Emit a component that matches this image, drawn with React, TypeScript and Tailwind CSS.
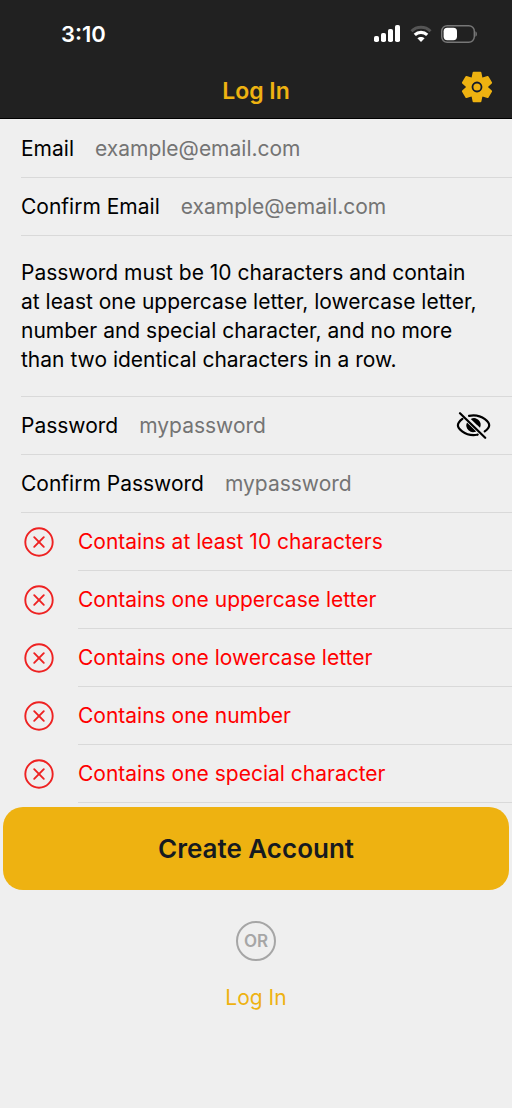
import type { ReactNode } from "react";

function SignalIcon() {
  return (
    <svg className="h-[18px] w-7" viewBox="0 0 28 18" fill="white" aria-hidden="true">
      <rect x="1" y="11" width="5" height="6" rx="1.8" />
      <rect x="8" y="8" width="5" height="9" rx="1.8" />
      <rect x="15" y="4" width="5" height="13" rx="1.8" />
      <rect x="22" y="0" width="5" height="17" rx="1.8" />
    </svg>
  );
}

function WifiIcon() {
  return (
    <svg className="h-[18px] w-[22px]" viewBox="0 0 22 18" fill="none" aria-hidden="true">
      <path d="M1.5 6.2C6.8 1 15.2 1 20.5 6.2" stroke="#555" strokeWidth="3" />
      <path d="M4.8 9.9c3.5-3.3 8.9-3.3 12.4 0" stroke="white" strokeWidth="3.2" />
      <path d="M11 17l-3.6-3.7c2-1.9 5.2-1.9 7.2 0z" fill="white" />
    </svg>
  );
}

function BatteryIcon() {
  return (
    <svg className="h-[18px] w-9" viewBox="0 0 36 18" fill="none" aria-hidden="true">
      <rect x="0.7" y="0.7" width="32.6" height="16.6" rx="5.5" stroke="#777" strokeWidth="1.4" />
      <rect x="2.6" y="2.8" width="13.4" height="12.4" rx="3.6" fill="white" />
      <path d="M34.4 6.2c2 .8 2 4.8 0 5.6z" fill="#777" />
    </svg>
  );
}

const toothAngles = [0, 60, 120, 180, 240, 300];

function GearIcon() {
  return (
    <svg className="size-8" viewBox="-16 -16 32 32" aria-hidden="true">
      <g fill="#eeb211" stroke="#eeb211" strokeWidth="2" strokeLinejoin="round">
        <circle r="9.8" />
        {toothAngles.map((angle) => (
          <path key={angle} d="M-3.4-14.3H3.4L4.4-9.3H-4.4z" transform={`rotate(${angle})`} />
        ))}
      </g>
      <circle r="4.5" fill="none" stroke="#111a2c" strokeWidth="1.8" />
    </svg>
  );
}

function EyeSlashIcon() {
  return (
    <svg
      className="h-7 w-9"
      viewBox="0 0 36 28"
      fill="none"
      stroke="black"
      strokeWidth="2.2"
      strokeLinecap="round"
      aria-hidden="true"
    >
      <path d="M6.4 6.8C3.5 9 1.9 11.600 1.9 13.2c0 3 6.2 9.9 15.6 9.9 1.5 0 2.9-.2 4.2-.5" />
      <path d="M13.1 3.9C14.5 3.5 16 3.3 17.5 3.3c9.5 0 15.7 6.9 15.7 9.9 0 1.6-1.6 4.1-4.5 6.2" />
      <path d="M14.8 6.9a6.8 6.8 0 0 1 9.2 8.900z" fill="black" stroke="none" />
      <path d="M20.200 19.500a6.800 6.800 0 0 1-9.200-8.900z" fill="black" stroke="none" />
      <path d="M4 1.200l25.200 24.600" />
    </svg>
  );
}

function CrossCircleIcon() {
  return (
    <svg
      className="size-[30px] shrink-0"
      viewBox="0 0 30 30"
      fill="none"
      stroke="#ee2222"
      strokeWidth="1.9"
      strokeLinecap="round"
      aria-hidden="true"
    >
      <circle cx="15" cy="15" r="13.7" />
      <path d="M10.2 10.2l9.6 9.6M19.8 10.2l-9.6 9.6" />
    </svg>
  );
}

type FieldProps = {
  id: string;
  label: string;
  type: string;
  placeholder: string;
  children?: ReactNode;
};

function Field({ id, label, type, placeholder, children }: FieldProps) {
  return (
    <div className="ml-[21px] flex h-[58px] items-center gap-[21px] border-b border-[#d9d9d9] pr-5">
      <label htmlFor={id} className="shrink-0">
        {label}
      </label>
      <input
        id={id}
        type={type}
        placeholder={placeholder}
        className="min-w-0 flex-1 bg-transparent outline-none placeholder:text-[#747474]"
      />
      {children}
    </div>
  );
}

const requirements = [
  "Contains at least 10 characters",
  "Contains one uppercase letter",
  "Contains one lowercase letter",
  "Contains one number",
  "Contains one special character",
];

export default function App() {
  return (
    <div className="min-h-screen bg-[#efefef] font-['Inter',sans-serif] text-[21px] leading-[29px] font-normal text-black">
      <header className="border-b border-black bg-[#212121]">
        <div className="flex h-[68px] items-center justify-between pr-[35px] pl-[61px]">
          <time className="text-[22px] font-semibold text-white">3:10</time>
          <div className="flex items-center gap-[9px]">
            <SignalIcon />
            <WifiIcon />
            <BatteryIcon />
          </div>
        </div>
        <div className="grid h-[50px] grid-cols-[1fr_auto_1fr] items-start px-[19px]">
          <h1 className="col-start-2 pt-[9px] text-[23px] font-semibold text-[#eeb211]">Log In</h1>
          <button type="button" aria-label="Settings" className="mt-[3px] justify-self-end">
            <GearIcon />
          </button>
        </div>
      </header>

      <main className="pt-px">
        <form onSubmit={(event) => event.preventDefault()}>
          <Field id="email" label="Email" type="email" placeholder="example@email.com" />
          <Field id="confirm-email" label="Confirm Email" type="email" placeholder="example@email.com" />
          <p className="ml-[21px] border-b border-[#d9d9d9] py-[22px] pr-7">
            Password must be 10 characters and contain at least one uppercase letter, lowercase letter, number and
            special character, and no more than two identical characters in a row.
          </p>
          <Field id="password" label="Password" type="password" placeholder="mypassword">
            <button type="button" aria-label="Show password">
              <EyeSlashIcon />
            </button>
          </Field>
          <Field id="confirm-password" label="Confirm Password" type="password" placeholder="mypassword" />
          <ul>
            {requirements.map((text) => (
              <li key={text} className="flex items-center gap-6 pl-6 text-[#ff0000]">
                <CrossCircleIcon />
                <span className="flex h-[58px] flex-1 items-center border-b border-[#d9d9d9]">{text}</span>
              </li>
            ))}
          </ul>
          <div className="px-[3px] pt-1">
            <button
              type="submit"
              className="h-[83px] w-full rounded-[20px] bg-[#eeb211] text-[26px] font-semibold text-[#161a20]"
            >
              Create Account
            </button>
          </div>
        </form>
        <div className="flex flex-col items-center gap-[22px] pt-[31px]">
          <span className="flex size-10 items-center justify-center rounded-full border-2 border-[#a6a6a6] text-[17px] font-semibold text-[#a6a6a6]">
            OR
          </span>
          <a href="#login" className="text-[#eeb211]">
            Log In
          </a>
        </div>
      </main>
    </div>
  );
}
